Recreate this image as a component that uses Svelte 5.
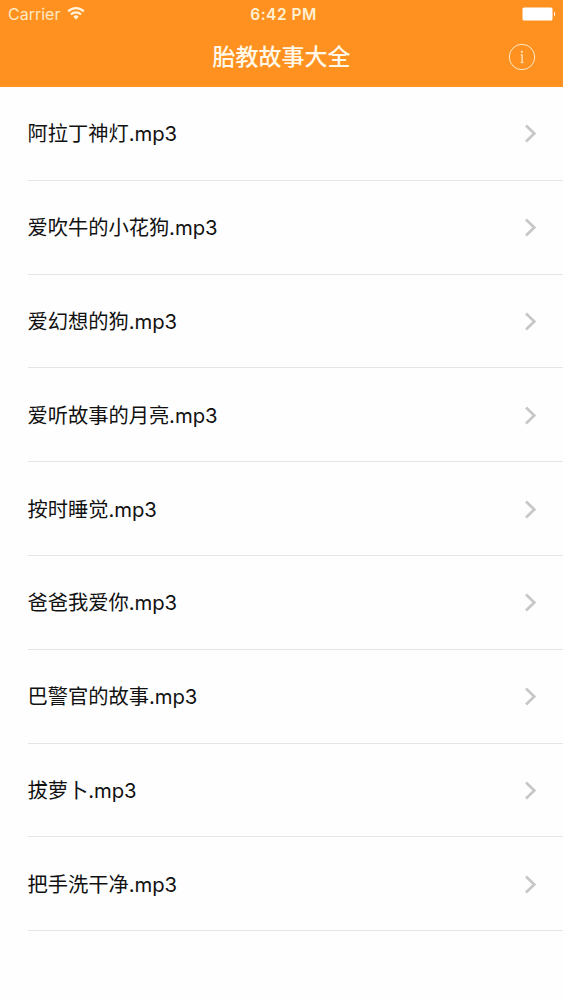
<script>
	const stories = [
		'阿拉丁神灯.mp3',
		'爱吹牛的小花狗.mp3',
		'爱幻想的狗.mp3',
		'爱听故事的月亮.mp3',
		'按时睡觉.mp3',
		'爸爸我爱你.mp3',
		'巴警官的故事.mp3',
		'拔萝卜.mp3',
		'把手洗干净.mp3'
	];
</script>

<div class="app">
	<header>
		<div class="status">
			<div class="carrier">
				<span>Carrier</span>
				<svg width="18" height="14" viewBox="0 0 18 14" fill="none" stroke="#fff4dc" stroke-width="2.2">
					<path d="M1.2 4.4a11 11 0 0 1 15.6 0M4 7.5a7 7 0 0 1 10 0" />
					<path d="M6.3 9.7a3.8 3.8 0 0 1 5.4 0L9 12.5z" fill="#fff4dc" stroke="none" />
				</svg>
			</div>
			<span class="time">6:42 PM</span>
			<svg class="battery" width="34" height="14" viewBox="0 0 34 14" fill="#fff">
				<rect x="0.5" y="0.5" width="30" height="13" rx="1.5" />
				<path d="M32 4.5q2.4 2.5 0 5z" />
			</svg>
		</div>
		<div class="nav">
			<h1>胎教故事大全</h1>
			<button aria-label="info">
				<svg width="28" height="28" viewBox="0 0 28 28" fill="none" stroke="#ffe9c4">
					<circle cx="14" cy="14" r="12.7" />
					<circle cx="13.9" cy="8.8" r="1.1" fill="#ffe9c4" stroke="none" />
					<path d="M12.7 11.9h1.4v7.6" stroke-width="1.3" />
					<path d="M12.5 19.6h3.2" />
				</svg>
			</button>
		</div>
	</header>

	<ul>
		{#each stories as story}
			<li>
				<span>{story}</span>
				<svg width="14" height="20" viewBox="0 0 14 20" fill="none" stroke="#c7c7c9" stroke-width="2.7">
					<path d="M2 2.5l8.3 8L2 18.5" />
				</svg>
			</li>
		{/each}
	</ul>
</div>

<style>
	:global(body) {
		background: #fff;
	}

	.app {
		height: 1000px;
		overflow: hidden;
		background: #fefefe;
		color: #111;
		font-family: Inter, 'Noto Sans CJK SC', sans-serif;
	}

	header {
		height: 87px;
		background: #ff9120;
		color: #fff8e8;
	}

	.status {
		display: grid;
		grid-template-columns: 1fr auto 1fr;
		align-items: center;
		height: 28px;
		padding: 0 7px 0 8px;
		font-size: 16px;
	}

	.carrier {
		display: flex;
		align-items: center;
		gap: 6px;
		color: #ffe9c4;
	}

	.carrier svg {
		margin-left: 1px;
	}

	.time {
		padding-left: 3px;
		color: #fff0d4;
		font-size: 15.5px;
		font-weight: 600;
		letter-spacing: 0.5px;
	}

	.battery {
		justify-self: end;
	}

	.nav {
		display: grid;
		grid-template-columns: 1fr auto 1fr;
		align-items: center;
		height: 58px;
		padding-right: 27px;
		padding-left: 27px;
	}

	h1 {
		grid-column: 2;
		margin: 0;
		padding-bottom: 4px;
		font-size: 23px;
		font-weight: 500;
	}

	button {
		justify-self: end;
		display: flex;
		padding: 0;
		border: none;
		background: none;
	}

	ul {
		margin: 0;
		padding: 0 0 0 28px;
		list-style: none;
	}

	li {
		display: flex;
		align-items: center;
		justify-content: space-between;
		box-sizing: border-box;
		height: 93.8px;
		padding-right: 25px;
		border-bottom: 1px solid #e5e5e6;
		font-size: 20.3px;
	}

	li span {
		margin-left: -0.5px;
		padding-bottom: 2px;
		letter-spacing: -0.05px;
	}
</style>
